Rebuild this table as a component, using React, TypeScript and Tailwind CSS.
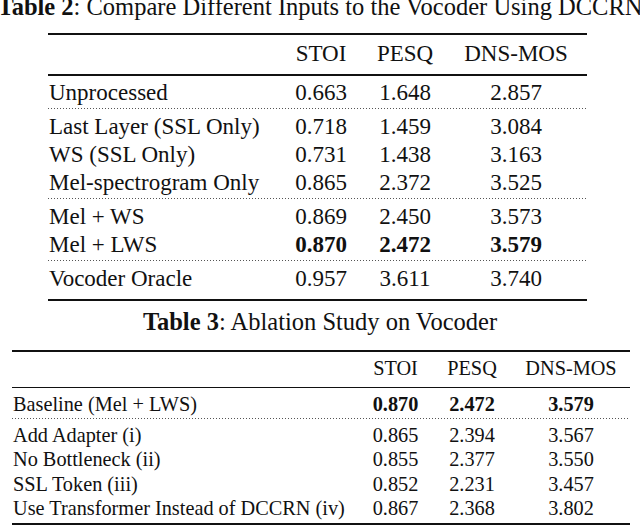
type Row = { label: string; v: [string, string, string]; bold?: boolean };

const table2: Row[][] = [
  [{ label: "Unprocessed", v: ["0.663", "1.648", "2.857"] }],
  [
    { label: "Last Layer (SSL Only)", v: ["0.718", "1.459", "3.084"] },
    { label: "WS (SSL Only)", v: ["0.731", "1.438", "3.163"] },
    { label: "Mel-spectrogram Only", v: ["0.865", "2.372", "3.525"] },
  ],
  [
    { label: "Mel + WS", v: ["0.869", "2.450", "3.573"] },
    { label: "Mel + LWS", v: ["0.870", "2.472", "3.579"], bold: true },
  ],
  [{ label: "Vocoder Oracle", v: ["0.957", "3.611", "3.740"] }],
];

const table3: Row[][] = [
  [{ label: "Baseline (Mel + LWS)", v: ["0.870", "2.472", "3.579"], bold: true }],
  [
    { label: "Add Adapter (i)", v: ["0.865", "2.394", "3.567"] },
    { label: "No Bottleneck (ii)", v: ["0.855", "2.377", "3.550"] },
    { label: "SSL Token (iii)", v: ["0.852", "2.231", "3.457"] },
    { label: "Use Transformer Instead of DCCRN (iv)", v: ["0.867", "2.368", "3.802"] },
  ],
];

const heads = ["STOI", "PESQ", "DNS-MOS"];

// línea punteada entre grupos
function Dots() {
  return (
    <div className="h-[6px] pt-[1.5px]">
      <div className="h-[1.2px] bg-[repeating-linear-gradient(90deg,#555_0_1.3px,transparent_1.3px_3px)]" />
    </div>
  );
}

function Table({ groups, cols, row }: { groups: Row[][]; cols: string; row: string }) {
  return (
    <>
      {groups.map((g, gi) => (
        <div key={gi}>
          {gi > 0 ? <Dots /> : null}
          {g.map((r) => (
            <div key={r.label} className={`grid ${cols} ${row} whitespace-nowrap`}>
              <span className="pl-px">{r.label}</span>
              {r.v.map((x, i) => (
                <span key={i} className={r.bold ? "text-center font-bold" : "text-center"}>
                  {x}
                </span>
              ))}
            </div>
          ))}
        </div>
      ))}
    </>
  );
}

export default function App() {
  return (
    <div className="h-[526px] w-[640px] overflow-hidden bg-white font-['Liberation_Serif','Times_New_Roman',Times,serif] text-[#111]">
      {/* Table 2 */}
      <div className="-mt-[5px] flex justify-center whitespace-nowrap text-[24.5px] leading-[24px]">
        <span>
          <b>Table 2</b>: Compare Different Inputs to the Vocoder Using DCCRN
        </span>
      </div>
      <div className="ml-[48px] w-[539px] text-[23px]">
        <div className="mt-[14px] h-[2px] bg-[#111]" />
        <div className="mt-[5px] grid h-[28px] grid-cols-[229px_88px_80px_142px] leading-[28px]">
          <span />
          {heads.map((h) => (
            <span key={h} className="text-center">{h}</span>
          ))}
        </div>
        <div className="mt-[6px] h-[1.5px] bg-[#111]" />
        <div className="mt-[3px]">
          <Table groups={table2} cols="grid-cols-[229px_88px_80px_142px]" row="h-[28px] leading-[28px]" />
        </div>
        <div className="mt-[6px] h-[2px] bg-[#111]" />
      </div>

      {/* Table 3 */}
      <div className="mt-[9.5px] flex justify-center whitespace-nowrap text-[24.5px] leading-[24px]">
        <span>
          <b>Table 3</b>: Ablation Study on Vocoder
        </span>
      </div>
      <div className="ml-[12px] w-[618px] text-[20.3px]">
        <div className="mt-[16px] h-[2px] bg-[#111]" />
        <div className="mt-[4px] grid h-[24.5px] grid-cols-[347px_73px_80px_118px] leading-[24.5px]">
          <span />
          {heads.map((h) => (
            <span key={h} className="text-center">{h}</span>
          ))}
        </div>
        <div className="mt-[6px] h-[1.5px] bg-[#111]" />
        <div className="mt-[4px]">
          <Table groups={table3} cols="grid-cols-[347px_73px_80px_118px]" row="h-[24.5px] leading-[24.5px]" />
        </div>
        <div className="mt-[2px] h-[2px] bg-[#111]" />
      </div>
    </div>
  );
}
